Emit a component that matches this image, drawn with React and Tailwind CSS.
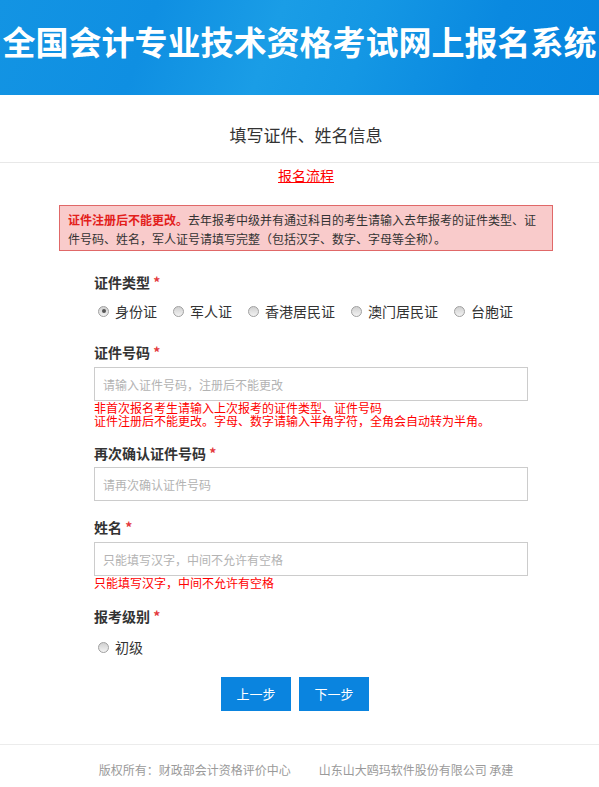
const FONT = { fontFamily: '"Noto Sans CJK SC", "Microsoft YaHei", sans-serif' }

const ID_TYPES = ['身份证', '军人证', '香港居民证', '澳门居民证', '台胞证']

function Radio({ label, checked }) {
  return (
    <label className="flex shrink-0 items-center mr-[12px] text-[14px] leading-[20px] text-[#333] whitespace-nowrap">
      <span className="shrink-0 ml-[4px] mr-[6px] w-[11px] h-[11px] rounded-full border border-[#a0a0a0] bg-gradient-to-b from-[#d0d0d0] to-[#f3f3f3] flex items-center justify-center">
        {checked && <span className="w-[4px] h-[4px] rounded-full bg-[#555]" />}
      </span>
      {label}
    </label>
  )
}

function FieldLabel({ children, className = '' }) {
  return (
    <div className={`text-[14px] leading-[20px] font-bold text-[#333] ${className}`}>
      {children} <span className="text-[#e4393c]">*</span>
    </div>
  )
}

function TextInput({ placeholder, className = '' }) {
  return (
    <input
      type="text"
      placeholder={placeholder}
      className={`block w-full h-[34px] border border-[#cccccc] px-[8px] text-[12px] text-[#333] placeholder:text-[#b3b3b3] outline-none ${className}`}
    />
  )
}

export default function App() {
  return (
    <div className="w-full min-h-[787px] bg-white overflow-hidden" style={FONT}>
      {/* banner */}
      <div className="h-[95px] bg-[linear-gradient(110deg,#1394e3_0%,#0f8fe2_25%,#1a9de6_45%,#1497e4_60%,#0a89e0_80%,#0785df_100%)] pt-[20px] flex justify-center">
        <h1 className="shrink-0 text-white font-bold text-[33px] leading-[42px] whitespace-nowrap">
          全国会计专业技术资格考试网上报名系统
        </h1>
      </div>

      <div className="pl-[13px]">
        <div className="pt-[26px] pb-[13px] text-center text-[17px] leading-[28px] text-[#333]">
          填写证件、姓名信息
        </div>
      </div>
      <div className="border-b border-[#e8e8e8]" />

      <div className="pl-[13px]">
        <div className="mt-[2px] text-center text-[14px] leading-[20px]">
          <a href="#" className="text-[#ff0000] underline">报名流程</a>
        </div>

        {/* notice */}
        <div className="mt-[20px] mx-auto w-[494px] border border-[#e06868] bg-[#f9cbcb] pl-[8px] pr-[8px] pt-[4px] pb-[2px] text-[12px] leading-[19px] text-[#333]">
          <span className="font-bold text-[#e3201b]">证件注册后不能更改。</span>
          去年报考中级并有通过科目的考生请输入去年报考的证件类型、证件号码、姓名，军人证号请填写完整（包括汉字、数字、字母等全称）。
        </div>

        {/* form */}
        <div className="ml-[81px] w-[434px]">
          <FieldLabel className="mt-[21px]">证件类型</FieldLabel>
          <div className="mt-[9px] flex items-center">
            {ID_TYPES.map((t, i) => (
              <Radio key={t} label={t} checked={i === 0} />
            ))}
          </div>

          <FieldLabel className="mt-[21px]">证件号码</FieldLabel>
          <TextInput className="mt-[5px]" placeholder="请输入证件号码，注册后不能更改" />
          <div className="text-[12px] leading-[13px] text-[#ff0000]">
            <div>非首次报名考生请输入上次报考的证件类型、证件号码</div>
            <div>证件注册后不能更改。字母、数字请输入半角字符，全角会自动转为半角。</div>
          </div>

          <FieldLabel className="mt-[16px]">再次确认证件号码</FieldLabel>
          <TextInput className="mt-[4px]" placeholder="请再次确认证件号码" />

          <FieldLabel className="mt-[16px]">姓名</FieldLabel>
          <TextInput className="mt-[5px]" placeholder="只能填写汉字，中间不允许有空格" />
          <div className="text-[12px] leading-[13px] text-[#ff0000]">只能填写汉字，中间不允许有空格</div>

          <FieldLabel className="mt-[17px]">报考级别</FieldLabel>
          <div className="mt-[11px] flex items-center">
            <Radio label="初级" />
          </div>

          <div className="mt-[20px] ml-[127px] flex gap-2">
            <button className="w-[70px] h-[34px] bg-[#0a84df] text-white text-[13px]">上一步</button>
            <button className="w-[70px] h-[34px] bg-[#0a84df] text-white text-[13px]">下一步</button>
          </div>
        </div>
      </div>

      {/* footer */}
      <div className="mt-[33px] border-t border-[#ececec] pl-[13px] pt-[15px] pb-[7px]">
        <div className="flex justify-center gap-[28px] text-[12px] leading-[20px] text-[#9a9a9a]">
          <span>版权所有：财政部会计资格评价中心</span>
          <span>山东山大鸥玛软件股份有限公司 承建</span>
        </div>
      </div>
    </div>
  )
}
